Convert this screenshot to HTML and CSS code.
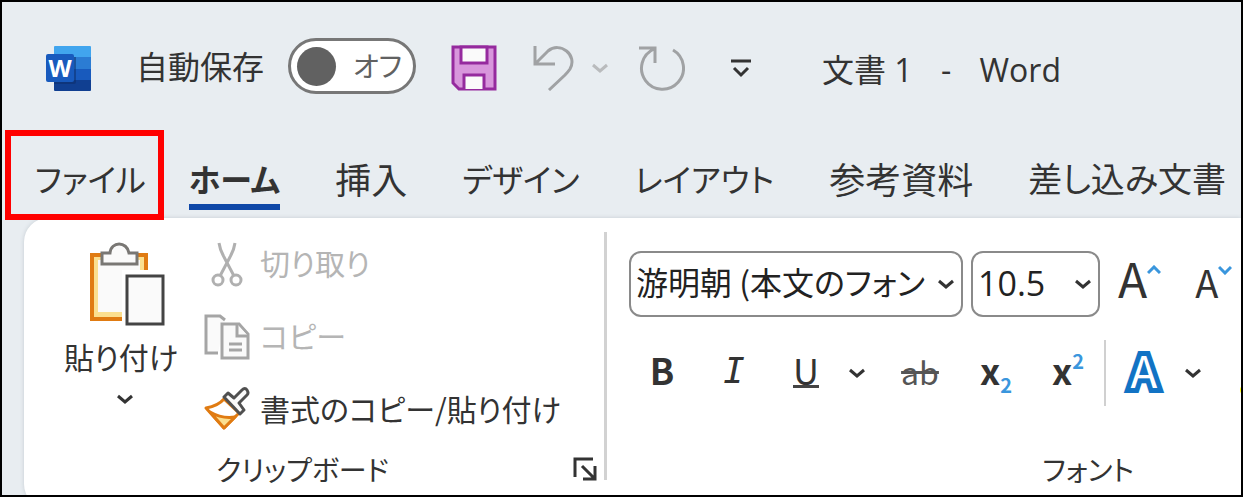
FILE: index.html
```html
<!DOCTYPE html>
<html lang="ja">
<head>
  <meta charset="UTF-8" />
  <meta name="viewport" content="width=device-width, initial-scale=1" />
  <title>文書 1 - Word</title>
  <link rel="stylesheet" href="styles.css">
</head>
<body>
<div class="window">
  <header class="titlebar">
    <svg class="logo" viewBox="0 0 45 45" aria-hidden="true">
      <path fill="#41a5ee" d="M8 1q0-1 1-1h35q1 0 1 1v11H8z"/>
      <path fill="#2b7cd3" d="M8 11h37v12H8z"/>
      <path fill="#185abd" d="M8 23h37v11H8z"/>
      <path fill="#103f91" d="M8 34h37v10q0 1-1 1H9q-1 0-1-1z"/>
      <path fill="#0b2c66" opacity=".5" d="M8 11h22v25q0 2-2 2H8z"/>
      <rect y="8" width="28" height="28" rx="2" fill="#185abd"/>
      <text x="14" y="31" class="logo-letter">W</text>
    </svg>
    <label class="autosave-label" for="autosave">自動保存</label>
    <span class="switch">
      <input type="checkbox" id="autosave" role="switch">
      <span class="switch-text">オフ</span>
    </span>
    <button class="icon-button save" aria-label="上書き保存">
      <svg width="46" height="46" viewBox="0 0 46 46">
        <path fill="#d896dc" stroke="#952a9e" stroke-width="3" d="M2 2h42v42H8l-6-6z"/>
        <path fill="#fafafa" stroke="#952a9e" stroke-width="3" d="M10 2h26v16H10zM13 44V30h20v14"/>
      </svg>
    </button>
    <button class="icon-button undo" aria-label="元に戻す">
      <svg width="42" height="46" viewBox="0 0 42 46" fill="none" stroke="#a0a2a4" stroke-width="3">
        <path d="M2 1v18h20M3 18L15 6C27-4 45 10 37 24Q35 27 32 30L16 45"/>
      </svg>
    </button>
    <button class="icon-button undo-menu" aria-label="元に戻すの一覧">
      <svg width="18" height="10" viewBox="0 0 18 10" fill="none" stroke="#b9bbbd" stroke-width="3"><path d="M2 2l7 6 7-6"/></svg>
    </button>
    <button class="icon-button redo" aria-label="繰り返し">
      <svg width="46" height="46" viewBox="0 0 46 46" fill="none" stroke="#a0a2a4" stroke-width="3">
        <path d="M0 3h16v15M15 4A21 21 0 1 0 34 5"/>
      </svg>
    </button>
    <button class="icon-button customize" aria-label="クイック アクセス ツール バーのユーザー設定">
      <svg width="22" height="20" viewBox="0 0 22 20" fill="none" stroke="#333" stroke-width="3"><path d="M1 3h20M4 10l7 7 7-7"/></svg>
    </button>
    <h1 class="doc-title">文書 1 <span class="dash">-</span> Word</h1>
  </header>

  <nav class="tabs">
    <a class="tab tab-kana tab-file" href="#file">ファイル</a>
    <a class="tab tab-kana tab-active" href="#home">ホーム</a>
    <a class="tab" href="#insert">挿入</a>
    <a class="tab tab-kana" href="#design">デザイン</a>
    <a class="tab tab-kana" href="#layout">レイアウト</a>
    <a class="tab" href="#references">参考資料</a>
    <a class="tab tab-long" href="#mailings">差し込み文書</a>
  </nav>

  <main class="ribbon">
    <section class="group clipboard">
      <div class="clipboard-body">
        <button class="paste">
          <svg width="76" height="84" viewBox="0 0 76 84">
            <path fill="#fbdf8f" d="M2 12h56v66H2z"/>
            <path fill="#fafafa" d="M9 18h42v52H9z"/>
            <path fill="none" stroke="#e07b12" stroke-width="4" d="M33 77H3V13h54v18"/>
            <path fill="#fff" d="M33 28h43v56H33z"/>
            <path fill="#fafafa" stroke="#797774" stroke-width="3" d="M13 22V11h8c1-12 17-12 19 0h8v11z"/>
            <rect x="38" y="34" width="36" height="48" fill="#fafafa" stroke="#444" stroke-width="3"/>
          </svg>
          <span class="paste-text">貼り付け</span>
          <svg class="chevron" viewBox="0 0 18 10"><path d="M2 2l7 6 7-6"/></svg>
        </button>
        <div class="commands">
          <button class="command" disabled>
            <svg width="46" height="46" viewBox="0 0 46 46" fill="none" stroke="#b0b0b0" stroke-width="3">
              <path d="M15 2q1 7 5 14l10 19M31 2q-1 7-5 14L16 35"/><circle cx="14" cy="39" r="5"/><circle cx="32" cy="39" r="5"/>
            </svg>
            <span>切り取り</span>
          </button>
          <button class="command" disabled>
            <svg width="46" height="46" viewBox="0 0 46 46" fill="#fafafa" stroke="#a5a5a5" stroke-width="3">
              <path d="M14 39H2V2h14l5 4"/><path d="M18 10h17l9 10v24H18z"/><path d="M33 10v12h11M25 30h13M25 36h13"/>
            </svg>
            <span>コピー</span>
          </button>
          <button class="command">
            <svg width="46" height="46" viewBox="0 0 46 46" stroke-linejoin="round">
              <path fill="#fff" stroke="#e07b12" stroke-width="3" d="M20 12q-6 7-18 9l18 20 15-15z"/>
              <path fill="#fbdf8f" stroke="#e07b12" stroke-width="3" d="M6 25q12 7 25 5L20 41z"/>
              <path fill="#fafafa" stroke="#505050" stroke-width="3" d="M20 10l4-4 6 5 8-8q3-3 5 0t0 5l-8 8 5 7-4 4z"/>
            </svg>
            <span>書式のコピー/貼り付け</span>
          </button>
        </div>
      </div>
      <footer class="group-footer">
        <h2 class="group-name">クリップボード</h2>
        <button class="icon-button launcher" aria-label="クリップボードのオプション">
          <svg width="24" height="24" viewBox="0 0 24 24" fill="none" stroke="#333" stroke-width="3"><path d="M2 20V2h18M9 9l12 12M22 9v13H10"/></svg>
        </button>
      </footer>
    </section>

    <section class="group font">
      <div class="font-row">
        <span class="combo combo-name">
          <select aria-label="フォント"><option>游明朝 (本文のフォント)</option></select>
          <svg class="chevron" viewBox="0 0 18 10"><path d="M2 2l7 6 7-6"/></svg>
        </span>
        <span class="combo combo-size">
          <select aria-label="フォント サイズ"><option>10.5</option></select>
          <svg class="chevron" viewBox="0 0 18 10"><path d="M2 2l7 6 7-6"/></svg>
        </span>
        <button class="size-button grow" aria-label="フォント サイズの拡大">A<svg width="14" height="10" viewBox="0 0 14 10"><path d="M1 8l6-6 6 6"/></svg></button>
        <button class="size-button shrink" aria-label="フォント サイズの縮小">A<svg width="14" height="10" viewBox="0 0 14 10"><path d="M1 2l6 6 6-6"/></svg></button>
      </div>
      <div class="format-row">
        <button class="format bold">B</button>
        <button class="format italic">I</button>
        <button class="format underline"><span>U</span></button>
        <button class="menu" aria-label="下線の種類"><svg class="chevron" viewBox="0 0 18 10"><path d="M2 2l7 6 7-6"/></svg></button>
        <button class="format strike"><span>ab</span></button>
        <button class="format script">x<sub>2</sub></button>
        <button class="format script">x<sup>2</sup></button>
        <span class="divider"></span>
        <button class="format effects">A</button>
        <button class="menu effects-menu" aria-label="文字の効果"><svg class="chevron" viewBox="0 0 18 10"><path d="M2 2l7 6 7-6"/></svg></button>
        <button class="highlighter" aria-label="蛍光ペンの色"></button>
      </div>
      <footer class="group-footer">
        <h2 class="group-name">フォント</h2>
      </footer>
    </section>
  </main>
</div>
</body>
</html>
```

FILE: styles.css
```css
* {
  box-sizing: border-box;
}
body {
  margin: 0;
  color: #333;
  font-family: "Noto Sans CJK JP", sans-serif;
  font-size: 32px;
  line-height: 40px;
  font-feature-settings: "palt";
}
button {
  padding: 0;
  border: none;
  background: none;
  color: inherit;
  font: inherit;
  font-feature-settings: inherit;
  cursor: pointer;
}
svg {
  display: block;
  flex: none;
}
h1, h2 {
  margin: 0;
  font-weight: 400;
}
.window {
  height: 100vh;
  overflow: hidden;
  border: 2px solid #000;
  background: #e8edf1;
}
.chevron {
  width: 18px;
  height: 10px;
  fill: none;
  stroke: #333;
  stroke-width: 3;
}

/* title bar */
.titlebar {
  display: flex;
  align-items: center;
  height: 128px;
  padding: 4px 0 0 44px;
  white-space: nowrap;
}
.logo {
  width: 45px;
  height: 45px;
}
.logo-letter {
  fill: #fff;
  font-family: "Open Sans", sans-serif;
  font-size: 24px;
  font-weight: 700;
  text-anchor: middle;
}
.autosave-label {
  margin: 0 24px 0 45px;
  padding-bottom: 6px;
}
.switch {
  display: grid;
  align-items: center;
  width: 128px;
  height: 56px;
  margin-bottom: 4px;
}
.switch input,
.switch-text {
  grid-area: 1 / 1;
}
.switch input {
  display: flex;
  align-items: center;
  width: 100%;
  height: 100%;
  margin: 0;
  padding-left: 6px;
  appearance: none;
  border: 3px solid #777;
  border-radius: 28px;
  background: #fff;
}
.switch input::before {
  content: "";
  width: 39px;
  height: 39px;
  border-radius: 50%;
  background: #616161;
}
.switch-text {
  padding: 0 14px 2px 0;
  color: #616161;
  font-size: 28px;
  text-align: right;
  pointer-events: none;
}
.save { margin-left: 35px; }
.undo { margin-left: 36px; }
.undo-menu { margin-left: 16px; }
.redo { margin-left: 30px; }
.customize { margin-left: 45px; }
.doc-title {
  margin-left: 70px;
  padding-top: 4px;
  font-family: "Open Sans", "Noto Sans CJK JP", sans-serif;
  font-size: 32px;
}
.dash {
  margin: 0 20px;
}

/* tabs */
.tabs {
  display: flex;
  align-items: stretch;
  height: 88px;
  padding-left: 3px;
  white-space: nowrap;
}
.tab {
  margin-left: 55px;
  padding-top: 28px;
  color: inherit;
  font-size: 36px;
  text-decoration: none;
}
.tab-kana {
  font-size: 32px;
}
.tab-long {
  font-size: 34px;
}
.tab-file {
  position: relative;
  margin: 0 0 -2px;
  padding: 22px 12px 0 24px;
  border: 6px solid #f00;
}
.tab-active {
  height: 80px;
  margin-left: 25px;
  border-bottom: 6px solid #0f48a8;
  font-weight: 700;
}

/* ribbon */
.ribbon {
  display: flex;
  height: 290px;
  margin-left: 22px;
  border-radius: 24px 0 0 24px;
  background: #fff;
  box-shadow: 0 0 4px #c5ccd2;
  white-space: nowrap;
}
.group {
  display: flex;
  flex-direction: column;
}
.clipboard {
  position: relative;
  flex: none;
  width: 583px;
  padding-top: 9px;
}
.clipboard::after {
  content: "";
  position: absolute;
  top: 14px;
  right: 0;
  width: 3px;
  height: 248px;
  background: #d2d2d2;
}
.clipboard-body {
  display: flex;
  align-items: flex-start;
  gap: 24px;
  padding-left: 38px;
  font-size: 30px;
}
.paste {
  display: flex;
  flex-direction: column;
  align-items: center;
  width: 118px;
  padding-top: 15px;
}
.paste svg:first-child {
  margin-left: 12px;
}
.paste-text {
  margin-top: 10px;
}
.paste .chevron {
  margin: 18px 0 0 8px;
}
.command {
  display: flex;
  align-items: center;
  gap: 10px;
  height: 73px;
}
.command span {
  padding-bottom: 4px;
}
.command:disabled {
  color: #b5b5b5;
}
.group-footer {
  display: flex;
  align-items: center;
}
.group-name {
  font-size: 28px;
}
.clipboard .group-footer {
  justify-content: space-between;
  padding: 3px 10px 0 192px;
}

.font {
  flex: 1;
  padding: 33px 0 0 22px;
}
.font-row,
.format-row {
  display: flex;
  align-items: center;
}
.combo {
  display: grid;
  align-items: center;
  flex: none;
  height: 66px;
  margin-right: 8px;
}
.combo select,
.combo .chevron {
  grid-area: 1 / 1;
}
.combo select {
  width: 100%;
  height: 100%;
  padding: 0 36px 6px 5px;
  appearance: none;
  border: 2px solid #8a8a8a;
  border-radius: 12px;
  background: #fff;
  color: #222;
  font-family: "Noto Sans CJK JP", sans-serif;
  font-size: 32px;
  font-feature-settings: inherit;
}
.combo .chevron {
  justify-self: end;
  margin-right: 8px;
  pointer-events: none;
}
.combo-name { width: 334px; }
.combo-size { width: 129px; }
.combo-size select {
  padding-bottom: 2px;
  font-family: "Open Sans", sans-serif;
  font-size: 34px;
}
.size-button {
  display: flex;
  align-items: baseline;
  align-self: flex-start;
  flex: none;
  line-height: 48px;
}
.size-button svg {
  align-self: flex-start;
  fill: none;
  stroke: #3a96dd;
  stroke-width: 3;
}
.grow {
  margin: 2px 0 0 10px;
  font-size: 48px;
}
.grow svg {
  margin-top: 12px;
}
.shrink {
  margin: 7px 0 0 34px;
  font-size: 38px;
}
.shrink svg {
  margin-top: 7px;
}
.format-row {
  height: 112px;
  margin-left: -3px;
}
.format {
  flex: none;
  width: 72px;
  padding-bottom: 8px;
  font-size: 36px;
}
.italic {
  padding-bottom: 4px;
  font-family: "DejaVu Sans Mono", monospace;
  font-style: italic;
}
.bold {
  font-weight: 700;
}
.underline span {
  display: inline-block;
  width: 26px;
  border-bottom: 3px solid #444;
  line-height: 32px;
}
.menu {
  flex: none;
  width: 30px;
  margin-right: 8px;
  padding-left: 6px;
}
.strike {
  width: 80px;
  padding-bottom: 4px;
  color: #555;
  font-size: 32px;
  text-decoration: line-through;
}
.strike span {
  padding: 0 4px;
}
.script {
  font-weight: 700;
}
.script sub,
.script sup {
  color: #3a96dd;
  font-size: 20px;
  line-height: 0;
}
.script sup {
  vertical-align: 16px;
}
.divider {
  flex: none;
  width: 2px;
  height: 66px;
  background: #d0d0d0;
}
.effects {
  padding-left: 4px;
  color: #fff;
  font-size: 44px;
  -webkit-text-stroke: 10px #1273c4;
  paint-order: stroke fill;
}
.highlighter {
  flex: none;
  width: 24px;
  height: 12px;
  margin: 34px 0 0 24px;
  border-radius: 6px 0 0 6px;
  background: #ff0;
}
.font .group-footer {
  justify-content: flex-end;
  padding: 20px 130px 0 0;
}
```
